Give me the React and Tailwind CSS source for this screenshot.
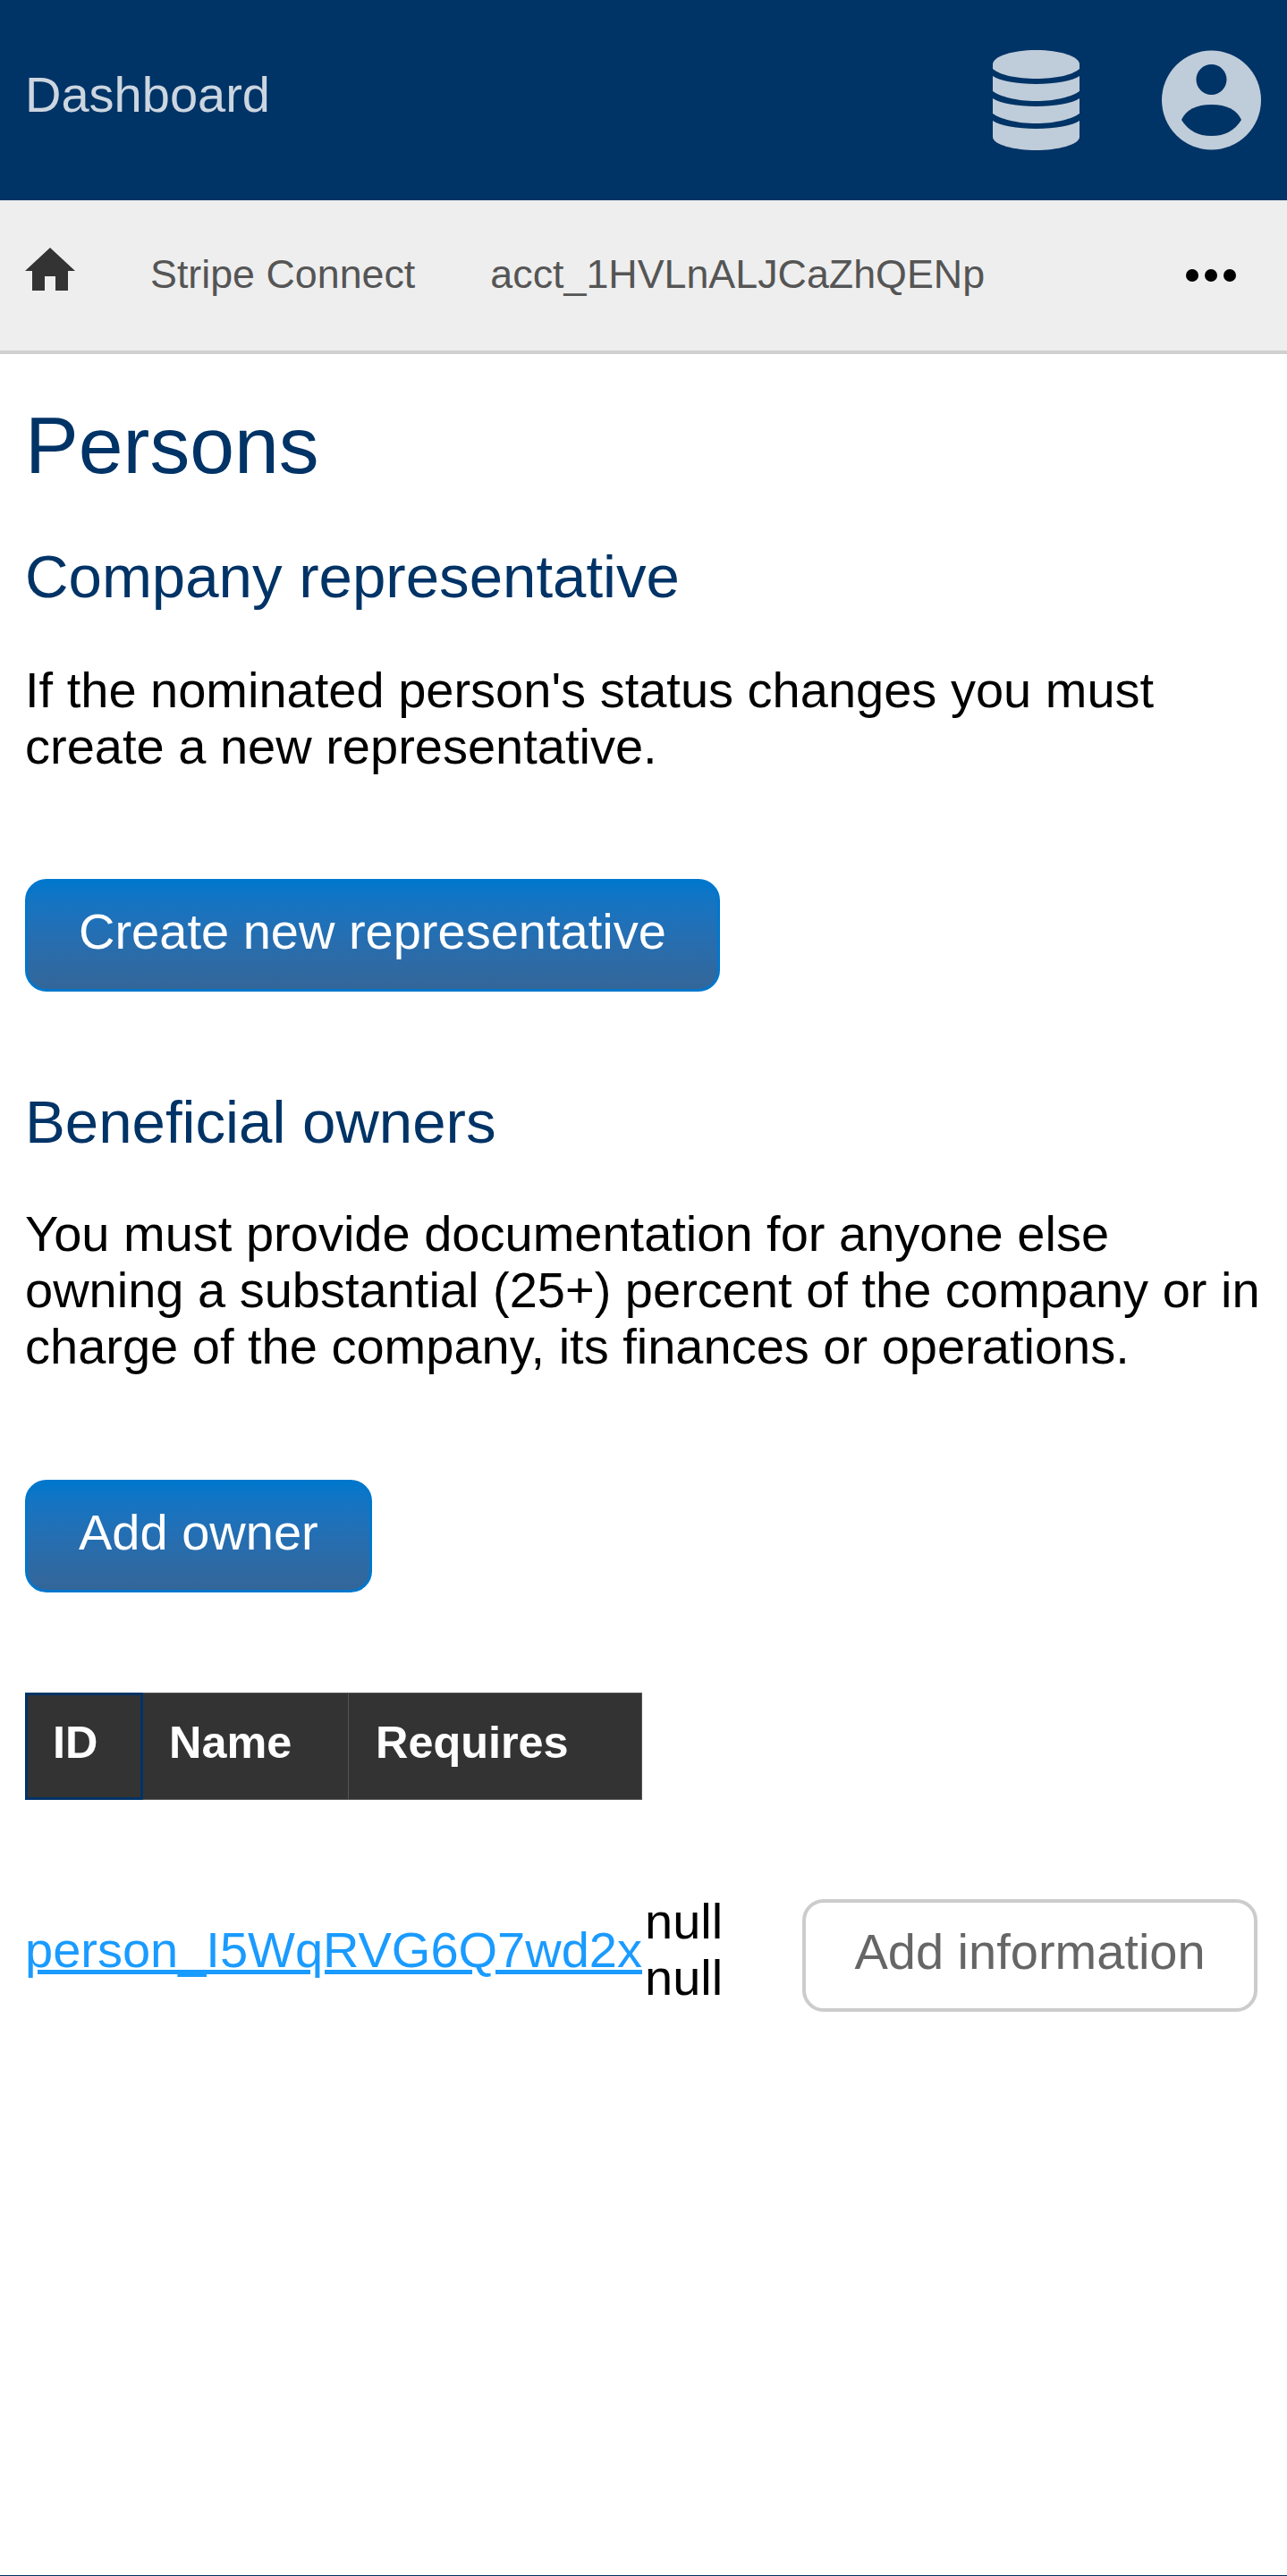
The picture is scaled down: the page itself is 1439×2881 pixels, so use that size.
export default function App() {
  const font = { fontFamily: '"Liberation Sans", Arial, sans-serif' };
  return (
    <div style={font} className="flex min-h-[2881px] flex-col bg-white text-black">
      <header className="flex h-[224px] items-center bg-[#003366] pl-[28px] pr-[28px]">
        <a className="mb-[12px] flex-1 text-[56px] leading-[64px] text-[#ccd6e0]">Dashboard</a>
        <svg className="h-[112px] w-[97px]" viewBox="0 0 97 112" fill="#bfccd9">
          <path d="M0 16C0 7 22 0 48.5 0S97 7 97 16V21C89 28 70 32 48.5 32S8 28 0 21z" />
          <path d="M0 29C8 34.5 27 38 48.5 38S89 34.5 97 29V46C89 52 70 57 48.5 57S8 52 0 46z" />
          <path d="M0 54C8 59.5 27 63 48.5 63S89 59.5 97 54V71C89 77 70 82 48.5 82S8 77 0 71z" />
          <path d="M0 79C8 84.5 27 88 48.5 88S89 84.5 97 79V97C97 106 72 112 48.5 112S0 106 0 97z" />
        </svg>
        <svg className="ml-[92px] h-[112px] w-[112px]" viewBox="0 0 112 112">
          <circle cx="55.5" cy="56" r="55.5" fill="#bfccd9" />
          <circle cx="55.5" cy="33" r="17" fill="#003366" />
          <path d="M22 78Q30 61 55.5 61T89 78Q78 96 55.5 96T22 78z" fill="#003366" />
        </svg>
      </header>
      <nav className="flex h-[172px] items-center border-b-[4px] border-[#d0d0d0] bg-[#eeeeee] pl-[28px] pr-[57px]">
        <svg className="mb-[14px] h-[48px] w-[56px]" viewBox="0 0 56 48" fill="#333333">
          <path d="M28 0 56 26H48V48H34V32H22V48H8V26H0z" />
        </svg>
        <span className="mb-[4px] ml-[84px] text-[44.8px] leading-[52px] text-[#555555]">Stripe Connect</span>
        <span className="mb-[4px] ml-[84px] flex-1 text-[44.8px] leading-[52px] text-[#555555]">acct_1HVLnALJCaZhQENp</span>
        <span className="flex gap-[7px]">
          <span className="h-[14px] w-[14px] rounded-full bg-black"></span>
          <span className="h-[14px] w-[14px] rounded-full bg-black"></span>
          <span className="h-[14px] w-[14px] rounded-full bg-black"></span>
        </span>
      </nav>
      <main className="flex-1 px-[28px]">
        <h1 className="mt-[50px] text-[89.6px] leading-[104px] text-[#003366]">Persons</h1>
        <h2 className="mt-[56px] text-[67.2px] leading-[78px] text-[#003366]">Company representative</h2>
        <p className="mt-[56px] text-[56px] leading-[63px]">If the nominated person's status changes you must create a new representative.</p>
        <button className="mt-[117px] block h-[126px] rounded-[24px] border-[3px] border-[#0077cc] bg-gradient-to-b from-[#0077cc] to-[#336699] px-[57px] pb-[8px] text-[56px] text-white">Create new representative</button>
        <h2 className="mt-[107px] text-[67.2px] leading-[78px] text-[#003366]">Beneficial owners</h2>
        <p className="mt-[54px] text-[56px] leading-[63px]">You must provide documentation for anyone else owning a substantial (25+) percent of the company or in charge of the company, its finances or operations.</p>
        <button className="mt-[118px] block h-[126px] rounded-[24px] border-[3px] border-[#0077cc] bg-gradient-to-b from-[#0077cc] to-[#336699] px-[57px] pb-[8px] text-[56px] text-white">Add owner</button>
        <div className="mt-[112px] flex h-[120px] w-[690px] bg-[#333333] text-[50.4px] font-bold text-white">
          <div className="flex w-[132px] items-center border-[3px] border-[#003366] pb-[8px] pl-[28px]">ID</div>
          <div className="flex w-[229px] items-center border-y border-[#555555] pb-[8px] pl-[29px]">Name</div>
          <div className="flex flex-1 items-center border border-[#555555] pb-[8px] pl-[30px]">Requires</div>
        </div>
        <div className="mt-[111px] flex h-[126px] items-center">
          <a className="mb-[14px] w-[690px] text-[56px] leading-[63px] text-[#1a9bff] underline">person_I5WqRVG6Q7wd2x</a>
          <div className="mb-[14px] flex-1 pl-[3px] text-[56px] leading-[63px]">null<br />null</div>
          <button className="mr-[5px] h-[126px] w-[509px] rounded-[24px] border-[4px] border-[#cccccc] bg-white pb-[8px] text-[56px] text-[#666666]">Add information</button>
        </div>
      </main>
      <div className="h-px bg-[#003366]"></div>
    </div>
  );
}
